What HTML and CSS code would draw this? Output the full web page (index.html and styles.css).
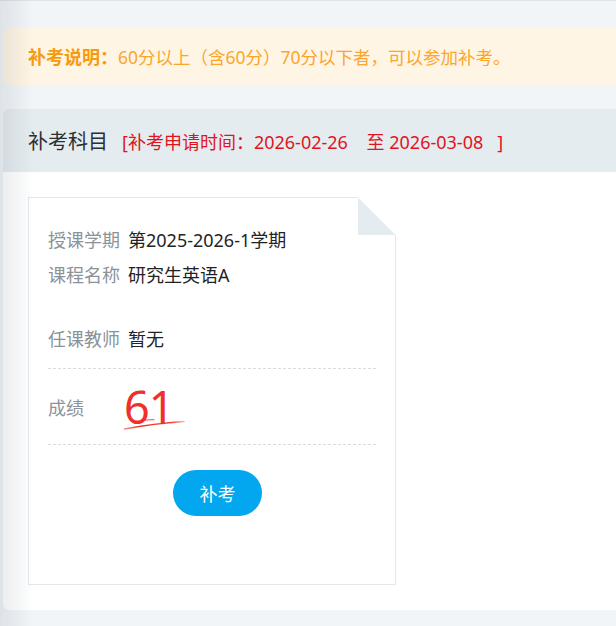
FILE: index.html
```html
<!DOCTYPE html>
<html lang="zh-CN">
<head>
<meta charset="utf-8">
<title>补考科目</title>
<link rel="stylesheet" href="styles.css">
</head>
<body>
<div class="edge-shade"></div>
<div class="notice">
  <span class="notice-title">补考说明：</span><span class="notice-text">60分以上（含60分）70分以下者，可以参加补考。</span>
</div>
<section class="panel">
  <header class="panel-head">
    <h2 class="panel-title">补考科目</h2>
    <span class="apply-time">[补考申请时间：2026-02-26&nbsp;&nbsp;&nbsp; 至 2026-03-08&nbsp;&nbsp; ]</span>
  </header>
  <div class="panel-body">
    <div class="card">
      <div class="info">
        <div class="row"><span class="label">授课学期</span><span class="value">第2025-2026-1学期</span></div>
        <div class="row row-tall"><span class="label">课程名称</span><span class="value">研究生英语A</span></div>
        <div class="row"><span class="label">任课教师</span><span class="value">暂无</span></div>
      </div>
      <div class="score-row">
        <span class="score-label">成绩</span>
        <span class="score">61
          <svg class="score-mark" width="66" height="18" viewBox="0 0 66 18">
            <defs>
              <linearGradient id="fade" x1="0" y1="0" x2="1" y2="0">
                <stop offset="0" stop-color="#f0302a" stop-opacity="0.55"/>
                <stop offset="0.3" stop-color="#f0302a" stop-opacity="1"/>
                <stop offset="0.8" stop-color="#f0302a" stop-opacity="0.9"/>
                <stop offset="1" stop-color="#f0302a" stop-opacity="0.35"/>
              </linearGradient>
            </defs>
            <path d="M0.5 15 Q 30 9.5 60 7.5" fill="none" stroke="url(#fade)" stroke-width="1.6" stroke-linecap="round"/>
            <path d="M18 6.5 Q 24 5.8 30 5.6" fill="none" stroke="#f0302a" stroke-opacity="0.7" stroke-width="1.2" stroke-linecap="round"/>
          </svg>
        </span>
      </div>
      <div class="actions">
        <button class="btn" type="button">补考</button>
      </div>
    </div>
  </div>
</section>
</body>
</html>
```

FILE: styles.css
```css
html, body {
  margin: 0;
  padding: 0;
}

body {
  background: #f2f5f8;
  border-top: 1px solid #dfe3e8;
  padding: 26px 0 17px 3px;
  font-family: "Noto Sans", "Noto Sans CJK SC", sans-serif;
  position: relative;
  min-height: 626px;
  box-sizing: border-box;
}

.edge-shade {
  position: fixed;
  left: 0;
  top: 0;
  bottom: 0;
  width: 34px;
  background: linear-gradient(to right, rgba(60, 80, 100, 0.11), rgba(60, 80, 100, 0));
  pointer-events: none;
  z-index: 5;
}

.notice {
  height: 58px;
  background: #fff5e4;
  border-radius: 6px 0 0 6px;
  display: flex;
  align-items: center;
  padding-left: 25px;
  font-size: 17.5px;
  color: #fca52b;
}

.notice-title {
  font-weight: bold;
  font-size: 18px;
  color: #f99a0c;
}

.panel {
  margin-top: 24px;
  background: #ffffff;
  border-radius: 6px 0 0 6px;
  overflow: hidden;
}

.panel-head {
  height: 63px;
  background: #e5ecef;
  display: flex;
  align-items: center;
  padding-left: 25px;
}

.panel-title {
  margin: 0;
  font-size: 20px;
  font-weight: normal;
  color: #2b2f33;
}

.apply-time {
  margin-left: 14px;
  font-size: 18px;
  color: #e0141e;
}

.panel-body {
  padding: 25px 0 25px 25px;
}

.card {
  position: relative;
  box-sizing: border-box;
  width: 368px;
  height: 388px;
  border: 1px solid #e2e8ec;
  padding: 29px 19px 0 19px;
}

.card::before {
  content: "";
  position: absolute;
  top: -1px;
  right: -1px;
  width: 38px;
  height: 38px;
  background: linear-gradient(to top right, #e5ecef 50%, #ffffff 50%);
}

.info {
  border-bottom: 1px dashed #d5dce1;
  padding-bottom: 16px;
}

.row {
  display: flex;
  font-size: 18px;
  line-height: 26px;
  margin-bottom: 9px;
}

.row:last-child {
  margin-bottom: 0;
}

.row-tall {
  min-height: 55px;
}

.label {
  width: 80px;
  flex: none;
  color: #8a939a;
}

.value {
  color: #1f2326;
}

.score-row {
  height: 75px;
  display: flex;
  align-items: center;
  border-bottom: 1px dashed #d5dce1;
}

.score-label {
  width: 76px;
  flex: none;
  font-size: 18px;
  color: #8a939a;
}

.score {
  position: relative;
  font-size: 45px;
  line-height: 46px;
  color: #f0302a;
  letter-spacing: -1px;
}

.score-mark {
  position: absolute;
  left: 0;
  top: 30px;
}

.actions {
  padding-top: 25px;
  padding-left: 125px;
}

.btn {
  width: 89px;
  height: 46px;
  border: none;
  border-radius: 23px;
  background: #02a7f0;
  color: #ffffff;
  font-family: "Noto Sans", "Noto Sans CJK SC", sans-serif;
  font-size: 18px;
  cursor: pointer;
  padding: 0;
}
```
